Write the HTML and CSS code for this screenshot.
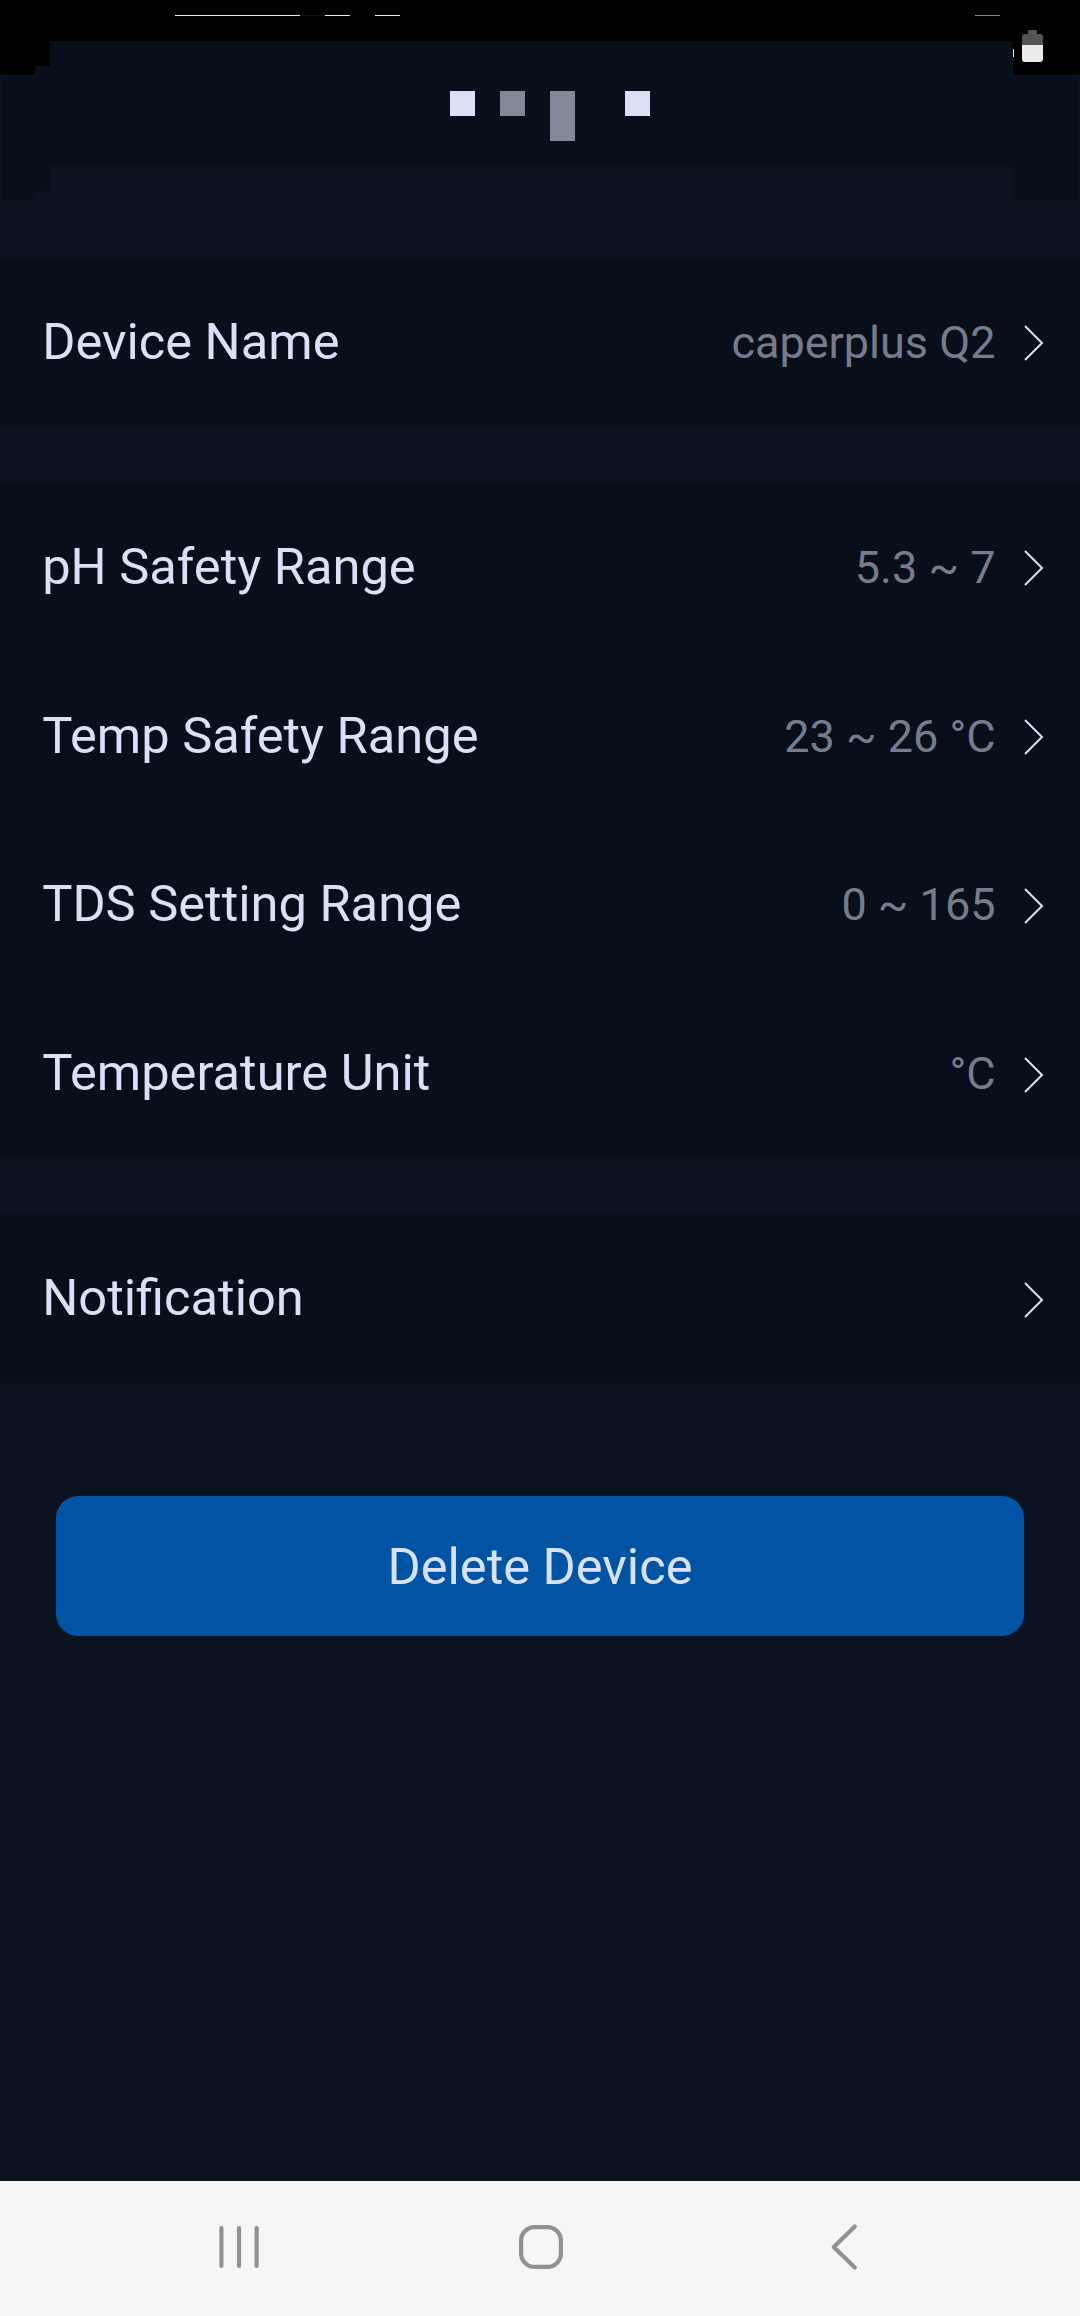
FILE: index.html
```html
<!DOCTYPE html>
<html lang="en">
<head>
<meta charset="utf-8">
<title>Device settings</title>
<link rel="stylesheet" href="styles.css">
</head>
<body>
<svg width="0" height="0" class="defs" aria-hidden="true">
  <symbol id="chevron" viewBox="0 0 20 36"><path d="M1 1 18 18 1 35" fill="none" stroke="currentColor" stroke-width="2"/></symbol>
</svg>
<div class="screen">
  <header class="top">
    <svg width="1080" height="202" viewBox="0 0 1080 202" shape-rendering="crispEdges" aria-hidden="true">
      <path class="black" d="M0 0H1080V75H1013V41H50V66H35V75H0Z"/>
      <path class="panel" d="M50 41H1013V77H1078V200H1013V166H50V191H35V200H2V77H35V66H50Z"/>
      <path class="line" d="M175 15H300V16H175ZM325 15H350V16H325ZM375 15H400V16H375Z"/>
      <path class="line-dim" d="M300 15H325V16H300Z"/>
      <path class="line-mid" d="M975 15H1000V16H975Z"/>
      <path class="bright" d="M450 91H475V116H450ZM625 91H650V116H625Z"/>
      <path class="muted" d="M500 91H525V116H500ZM550 91H575V141H550Z"/>
      <path class="line" d="M1013 49H1014V57H1013Z"/>
      <g shape-rendering="auto">
        <path class="battery" d="M1028 31Q1028 30 1029 30H1036Q1037 30 1037 31V34H1040Q1043 34 1043 37V46H1022V37Q1022 34 1025 34H1028Z"/>
        <path class="charge" d="M1022 45H1043V59Q1043 62 1040 62H1025Q1022 62 1022 59Z"/>
      </g>
    </svg>
  </header>
  <main class="content">
    <section class="group">
      <div class="row"><span class="label">Device Name</span><span class="value">caperplus Q2</span><svg class="chevron"><use href="#chevron"/></svg></div>
    </section>
    <section class="group">
      <div class="row"><span class="label">pH Safety Range</span><span class="value">5.3 ~ 7</span><svg class="chevron"><use href="#chevron"/></svg></div>
      <div class="row"><span class="label">Temp Safety Range</span><span class="value">23 ~ 26 °C</span><svg class="chevron"><use href="#chevron"/></svg></div>
      <div class="row"><span class="label">TDS Setting Range</span><span class="value">0 ~ 165</span><svg class="chevron"><use href="#chevron"/></svg></div>
      <div class="row"><span class="label">Temperature Unit</span><span class="value">°C</span><svg class="chevron"><use href="#chevron"/></svg></div>
    </section>
    <section class="group">
      <div class="row"><span class="label">Notification</span><svg class="chevron"><use href="#chevron"/></svg></div>
    </section>
    <button class="delete" type="button">Delete Device</button>
  </main>
  <nav class="navbar">
    <svg class="nav-icon" viewBox="0 0 48 48"><path d="M6.4 5V43M24 5V43M41.6 5V43"/></svg>
    <svg class="nav-icon" viewBox="0 0 48 48"><rect x="4.1" y="4.1" width="39.8" height="39.8" rx="13.5"/></svg>
    <svg class="nav-icon" viewBox="0 0 48 48"><path d="M35.8 3.4 14.8 24 35.8 44.6"/></svg>
  </nav>
</div>
</body>
</html>
```
FILE: styles.css
```css
* {
  box-sizing: border-box;
}

body {
  margin: 0;
  background: #0b1220;
  font-family: Roboto, sans-serif;
  color: #d9e1f6;
}

.defs {
  position: absolute;
}

.screen {
  display: flex;
  flex-direction: column;
  width: 1080px;
  height: 2316px;
}

.top {
  height: 258px;
}

.top svg {
  display: block;
}

.black { fill: #000; }
.panel { fill: #080f1b; }
.line { fill: #ececec; }
.line-dim { fill: #151515; }
.line-mid { fill: #868686; }
.bright { fill: #dae1f6; }
.muted { fill: #828799; }
.battery { fill: #545454; }
.charge { fill: #ececec; }

.content {
  flex: 1;
  display: flex;
  flex-direction: column;
  gap: 56.25px;
}

.group {
  background: #080f1b;
}

.row {
  display: flex;
  align-items: center;
  height: 168.75px;
  padding: 0 36px 0 42.2px;
}

.label {
  flex: 1;
  padding-bottom: 2px;
  font-size: 50.625px;
}

.value {
  font-size: 45px;
  color: #767c8b;
}

.chevron {
  width: 20px;
  height: 36px;
  margin: 2px 0 0 28.5px;
  color: #d9e1f6;
}

.delete {
  height: 140px;
  margin: 56.75px 56px 0;
  padding: 0;
  border: 0;
  border-radius: 22px;
  background: #0054a3;
  color: #d9e1f6;
  font: 50.625px Roboto, sans-serif;
}

.navbar {
  display: flex;
  align-items: center;
  justify-content: space-between;
  height: 135px;
  padding: 0 213px 3px 215px;
  background: #f6f6f6;
}

.nav-icon {
  width: 48px;
  height: 48px;
  fill: none;
  stroke: #919191;
  stroke-width: 4.2;
  stroke-linecap: round;
  stroke-linejoin: round;
}
```
